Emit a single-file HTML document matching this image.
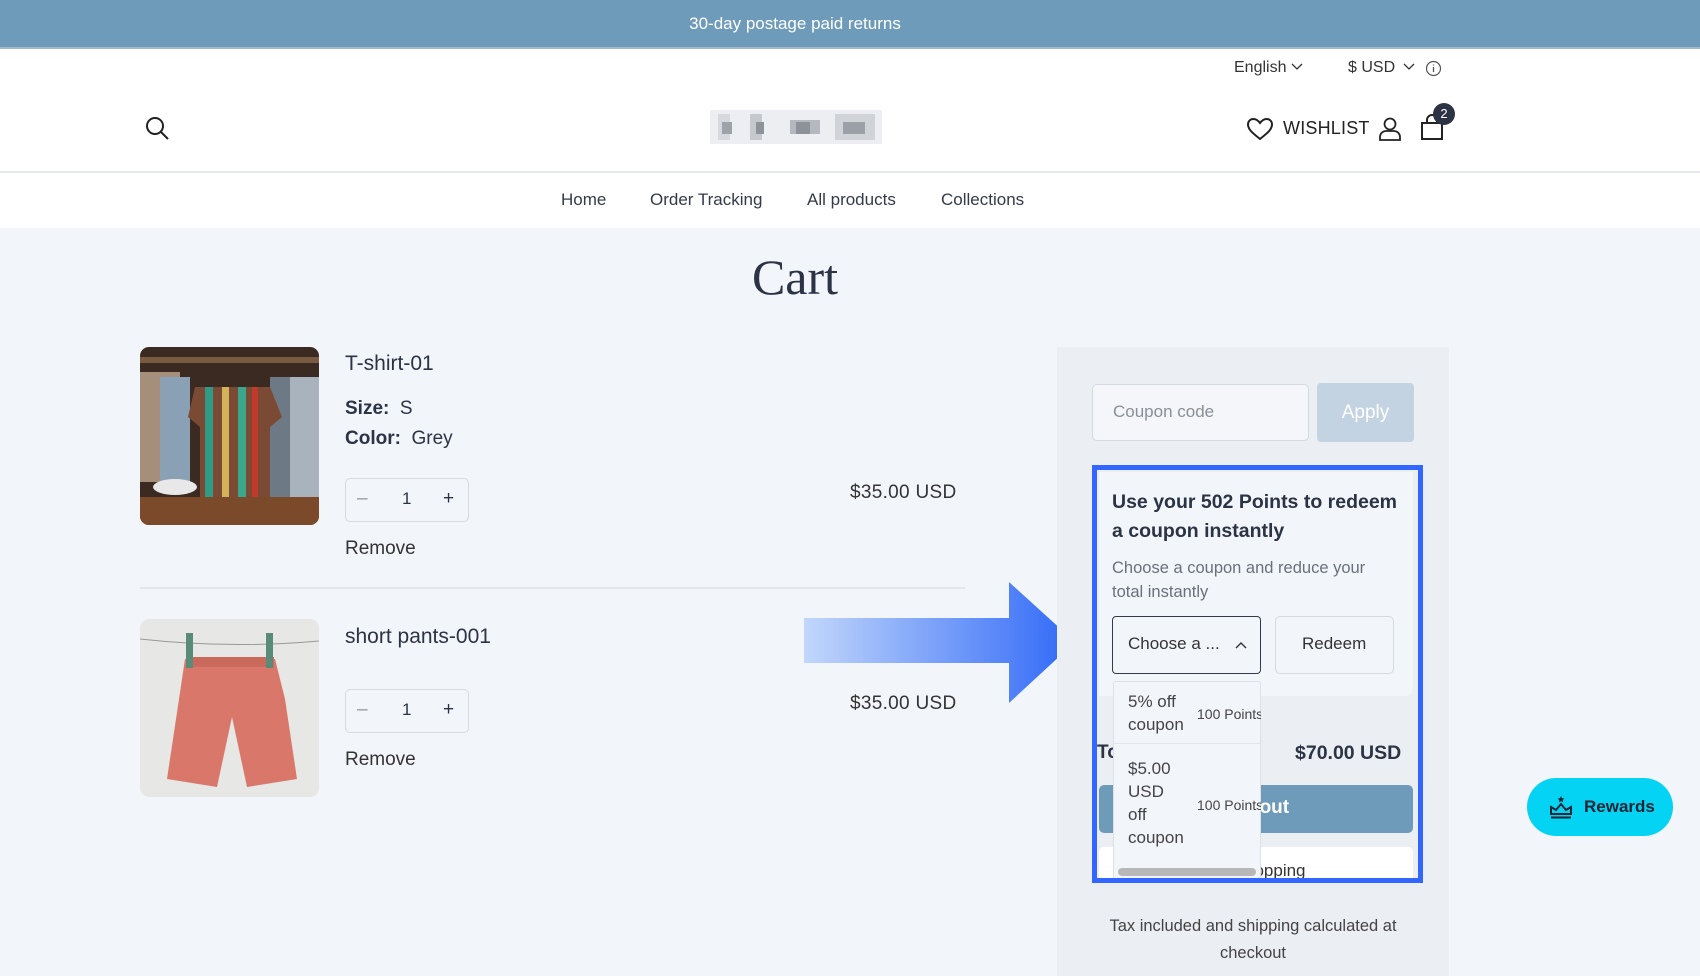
<!DOCTYPE html>
<html><head><meta charset="utf-8"><style>
*{box-sizing:border-box;margin:0;padding:0}
body{width:1700px;height:976px;overflow:hidden;background:#f2f5fa;font-family:"Liberation Sans",sans-serif;color:#2b3344;position:relative}
.a{position:absolute}
.banner{left:0;top:0;width:1700px;height:49px;background:#6f9bbb;color:#fff;font-size:17px;line-height:47px;border-bottom:2px solid #9fb9cc}
.hdr{left:0;top:49px;width:1700px;height:179px;background:#fff}
.line{left:0;top:171px;width:1700px;height:2px;background:#e6e9ee}
.nav{top:190px;font-size:17px;color:#333a48}
.t{white-space:nowrap}
.box{border:1.5px solid #d5d9e0;border-radius:5px}
</style></head><body>
<div class="a banner"><div style="width:1590px;text-align:center">30-day postage paid returns</div></div>
<div class="a hdr"></div>
<div class="a line"></div>
<div class="a t" style="left:1234px;top:59px;font-size:16px;color:#333">English</div>
<svg class="a" style="left:1291px;top:63px" width="12" height="8"><path d="M1 1l5 5 5-5" fill="none" stroke="#333" stroke-width="1.3"/></svg>
<div class="a t" style="left:1348px;top:59px;font-size:16px;color:#333">$ USD</div>
<svg class="a" style="left:1403px;top:63px" width="12" height="8"><path d="M1 1l5 5 5-5" fill="none" stroke="#333" stroke-width="1.3"/></svg>
<svg class="a" style="left:1425px;top:60px" width="17" height="17"><circle cx="8.5" cy="8.5" r="7" fill="none" stroke="#555" stroke-width="1.2"/><path d="M8.5 7v5M8.5 4.5v1" stroke="#555" stroke-width="1.3"/></svg>
<svg class="a" style="left:145px;top:116px" width="26" height="26"><circle cx="10" cy="10" r="8" fill="none" stroke="#222" stroke-width="2"/><path d="M16 16l7 7" stroke="#222" stroke-width="2"/></svg>
<svg class="a" style="left:710px;top:110px" width="172" height="34">
<rect width="172" height="34" fill="#eceef1"/>
<rect x="8" y="4" width="12" height="26" fill="#d6d8dd"/><rect x="12" y="12" width="10" height="12" fill="#9ea2a9"/>
<rect x="40" y="4" width="12" height="26" fill="#c5c8cd"/><rect x="46" y="12" width="8" height="12" fill="#8f939a"/>
<rect x="80" y="10" width="30" height="14" fill="#b5b8be"/><rect x="86" y="12" width="14" height="12" fill="#8d9198"/>
<rect x="125" y="4" width="40" height="26" fill="#d0d3d8"/><rect x="133" y="12" width="22" height="12" fill="#9ca0a7"/>
</svg>
<svg class="a" style="left:1246px;top:117px" width="28" height="24"><path d="M14 22C8 17 2 13 2 7.5 2 4 4.5 2 7.5 2 10.5 2 12.5 4 14 6 15.5 4 17.5 2 20.5 2 23.5 2 26 4 26 7.5 26 13 20 17 14 22z" fill="none" stroke="#222" stroke-width="2"/></svg>
<div class="a t" style="left:1283px;top:118px;font-size:18px;color:#222;letter-spacing:.2px">WISHLIST</div>
<svg class="a" style="left:1378px;top:116px" width="24" height="25"><circle cx="12" cy="8" r="5.5" fill="none" stroke="#222" stroke-width="1.8"/><path d="M2 24v-3a6 6 0 0 1 6-6h8a6 6 0 0 1 6 6v3z" fill="none" stroke="#222" stroke-width="1.8"/></svg>
<svg class="a" style="left:1420px;top:114px" width="24" height="27"><rect x="2" y="9" width="20" height="16" fill="none" stroke="#222" stroke-width="2"/><path d="M7 9V6a5 5 0 0 1 10 0v3" fill="none" stroke="#222" stroke-width="2"/></svg>
<div class="a" style="left:1433px;top:103px;width:22px;height:22px;border-radius:50%;background:#2b3344;color:#fff;font-size:13px;text-align:center;line-height:22px">2</div>
<div class="a t nav" style="left:561px">Home</div>
<div class="a t nav" style="left:650px">Order Tracking</div>
<div class="a t nav" style="left:807px">All products</div>
<div class="a t nav" style="left:941px">Collections</div>
<div class="a t" style="left:0;width:1590px;text-align:center;top:248px;font-family:'Liberation Serif',serif;font-size:50px;color:#2b3344">Cart</div>

<svg class="a" style="left:140px;top:347px;border-radius:9px" width="179" height="178">
<rect width="179" height="178" fill="#3a2a22"/><rect y="10" width="179" height="6" fill="#7a5a40"/>
<rect x="0" y="25" width="40" height="110" fill="#a68f7a"/><rect x="20" y="30" width="30" height="110" fill="#8aa0b5"/>
<rect x="130" y="30" width="49" height="120" fill="#6d7a86"/><rect x="150" y="30" width="29" height="120" fill="#a9b3bd"/>
<path d="M55 40h75l12 30-12 10v80H60V80l-12-10z" fill="#7b4a35"/>
<rect x="65" y="40" width="8" height="120" fill="#2f9a85"/><rect x="82" y="40" width="7" height="120" fill="#d3b35a"/><rect x="98" y="40" width="8" height="120" fill="#3aa68c"/><rect x="112" y="40" width="6" height="120" fill="#c0392b"/>
<rect y="150" width="179" height="28" fill="#7a4a2a"/><ellipse cx="35" cy="140" rx="22" ry="8" fill="#e8e8e8"/>
</svg>
<svg class="a" style="left:140px;top:619px;border-radius:9px" width="179" height="178">
<rect width="179" height="178" fill="#e7e7e5"/><path d="M0 20Q90 30 179 22" stroke="#999" fill="none"/>
<path d="M45 40h90l10 40 12 80-50 8-15-70-15 70-50-8 12-80z" fill="#d9786a"/>
<rect x="46" y="38" width="88" height="10" fill="#c96a5c"/>
<rect x="46" y="14" width="7" height="35" fill="#5a8a78"/><rect x="126" y="14" width="7" height="35" fill="#5a8a78"/>
</svg>

<div class="a t" style="left:345px;top:352px;font-size:21px">T-shirt-01</div>
<div class="a t" style="left:345px;top:398px;font-size:19px"><b style="font-weight:600">Size:</b>&nbsp; S</div>
<div class="a t" style="left:345px;top:428px;font-size:19px"><b style="font-weight:600">Color:</b>&nbsp; Grey</div>
<div class="a box" style="left:345px;top:478px;width:124px;height:44px;background:#f2f5fa"></div>
<div class="a t" style="left:357px;top:488px;font-size:19px;color:#999">–</div>
<div class="a t" style="left:402px;top:489px;font-size:17px">1</div>
<div class="a t" style="left:443px;top:488px;font-size:19px">+</div>
<div class="a t" style="left:345px;top:538px;font-size:19px;color:#333">Remove</div>
<div class="a t" style="left:850px;top:482px;font-size:19px;color:#333;letter-spacing:.3px">$35.00 USD</div>
<div class="a" style="left:140px;top:587px;width:825px;height:1.5px;background:#e3e6ea"></div>

<div class="a t" style="left:345px;top:625px;font-size:21px">short pants-001</div>
<div class="a box" style="left:345px;top:689px;width:124px;height:44px;background:#f2f5fa"></div>
<div class="a t" style="left:357px;top:699px;font-size:19px;color:#999">–</div>
<div class="a t" style="left:402px;top:700px;font-size:17px">1</div>
<div class="a t" style="left:443px;top:699px;font-size:19px">+</div>
<div class="a t" style="left:345px;top:749px;font-size:19px;color:#333">Remove</div>
<div class="a t" style="left:850px;top:693px;font-size:19px;color:#333;letter-spacing:.3px">$35.00 USD</div>

<svg class="a" style="left:804px;top:582px" width="272" height="122"><defs><linearGradient id="g"><stop offset="0" stop-color="#c2d7fb"/><stop offset="1" stop-color="#2f68f7"/></linearGradient></defs><path d="M0 36h205V0l66 60-66 61V81H0z" fill="url(#g)"/></svg>

<div class="a" style="left:1057px;top:347px;width:392px;height:629px;background:#ebeef3"></div>
<div class="a box" style="left:1092px;top:384px;width:217px;height:57px;background:#f4f6fa"></div>
<div class="a t" style="left:1113px;top:402px;font-size:17px;color:#8a8f98">Coupon code</div>
<div class="a" style="left:1317px;top:383px;width:97px;height:59px;background:#c3d3e1;border-radius:4px;color:#fff;font-size:19px;text-align:center;line-height:59px">Apply</div>

<div class="a" style="left:1092px;top:465px;width:331px;height:418px;border:5px solid #3366ff;background:#ebeef3;overflow:hidden">
 <div class="a" style="left:2px;top:2px;width:314px;height:224px;background:#f2f5fa;border-radius:0 0 8px 0"></div>
 <div class="a" style="left:15px;top:18px;width:290px;font-size:19.5px;line-height:29px;font-weight:bold;color:#2b3344">Use your 502 Points to redeem a coupon instantly</div>
 <div class="a" style="left:15px;top:86px;width:275px;font-size:16.5px;line-height:24px;color:#6a707a">Choose a coupon and reduce your total instantly</div>
 <div class="a" style="left:15px;top:146px;width:149px;height:58px;border:1.5px solid #333a48;border-radius:4px"></div>
 <div class="a t" style="left:31px;top:164px;font-size:17px;color:#333">Choose a ...</div>
 <svg class="a" style="left:138px;top:172px" width="12" height="8"><path d="M1 6l5-5 5 5" fill="none" stroke="#333" stroke-width="1.4"/></svg>
 <div class="a box" style="left:178px;top:146px;width:119px;height:58px"></div>
 <div class="a t" style="left:205px;top:164px;font-size:17px;color:#333">Redeem</div>
 <div class="a t" style="left:0;top:272px;font-size:19px;font-weight:bold">To</div>
 <div class="a t" style="left:198px;top:272px;font-size:19.5px;font-weight:bold">$70.00 USD</div>
 <div class="a" style="left:2px;top:315px;width:314px;height:48px;background:#6e9bb9;border-radius:5px"></div>
 <div class="a t" style="left:152px;top:327px;font-size:19px;color:#fff;font-weight:bold">kout</div>
 <div class="a" style="left:2px;top:377px;width:314px;height:50px;background:#fff;border-radius:5px"></div>
 <div class="a t" style="left:148px;top:391px;font-size:17px;color:#333">hopping</div>
 <div class="a" style="left:16px;top:211px;width:148px;height:200px;background:#f2f5fa;border:1px solid #dde1e7;border-radius:3px"></div>
 <div class="a" style="left:31px;top:220px;font-size:17px;line-height:23px;color:#444">5% off<br>coupon</div>
 <div class="a t" style="left:100px;top:236px;font-size:14px;color:#444;width:64px;overflow:hidden">100 Points</div>
 <div class="a" style="left:17px;top:273px;width:146px;height:1px;background:#e3e6ea"></div>
 <div class="a" style="left:31px;top:287px;font-size:17px;line-height:23px;color:#444">$5.00<br>USD<br>off<br>coupon</div>
 <div class="a t" style="left:100px;top:327px;font-size:14px;color:#444;width:64px;overflow:hidden">100 Points</div>
 <div class="a" style="left:21px;top:398px;width:138px;height:8px;border-radius:4px;background:#b8b8b8"></div>
</div>
<div class="a" style="left:1095px;top:913px;width:316px;text-align:center;font-size:16.5px;line-height:27px;color:#444">Tax included and shipping calculated at checkout</div>

<div class="a" style="left:1527px;top:778px;width:146px;height:58px;border-radius:29px;background:#05d3f4"></div>
<svg class="a" style="left:1549px;top:795px" width="24" height="25"><path d="M12 1l1 2.3 2.4.2-1.8 1.6.6 2.3-2.2-1.3-2.2 1.3.6-2.3-1.8-1.6 2.4-.2z" fill="#1a2433"/><path d="M2 19V12l5 3 5-6 5 6 5-3v7z" fill="none" stroke="#1a2433" stroke-width="2"/><rect x="2" y="21.5" width="20" height="2" fill="#1a2433"/></svg>
<div class="a t" style="left:1584px;top:797px;font-size:17px;font-weight:bold;color:#1a2433">Rewards</div>
</body></html>
